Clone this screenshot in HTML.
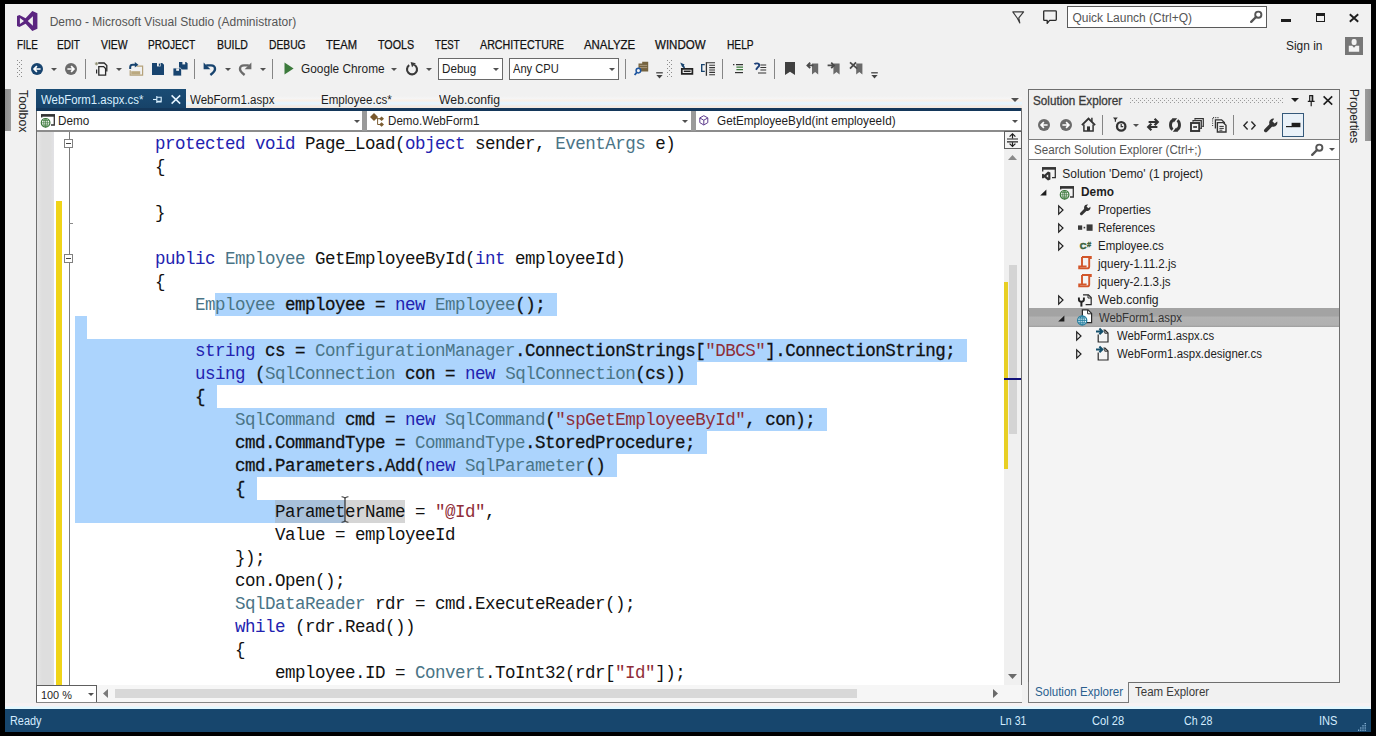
<!DOCTYPE html>
<html lang="en">
<head>
<meta charset="utf-8">
<title>Demo - Microsoft Visual Studio (Administrator)</title>
<style>
*{box-sizing:border-box;margin:0;padding:0}
html,body{width:1376px;height:736px;overflow:hidden;background:#000}
body{position:relative;font-family:"Liberation Sans",sans-serif;font-size:12px;color:#1e1e1e}
.abs,.t{position:absolute}
.t{white-space:nowrap;line-height:16px;height:16px;transform-origin:0 50%}
#win{position:absolute;left:5px;top:4px;width:1366px;height:728px;background:#f1f1f1;overflow:hidden}
/* everything inside #win is positioned in page coords via this wrapper */
#pg{position:absolute;left:-5px;top:-4px;width:1376px;height:736px}
.sep{position:absolute;width:1px;background:#858585}
.combo{position:absolute;background:#fff;border:1px solid #6a6a6a}
.code{position:absolute;left:75px;white-space:pre;font-family:"Liberation Mono","DejaVu Sans Mono",monospace;font-size:17.5px;letter-spacing:-0.5px;line-height:23px;height:23px;color:#111}
.selrow{-webkit-text-stroke:0.28px #111}.selrow span{-webkit-text-stroke:0}
.k{color:#2222b0}.y{color:#4a7486}.s{color:#8f2d38}
.ob{width:9px;height:9px;background:#fff;border:1px solid #808080}
.ob:after{content:"";position:absolute;left:1px;top:3px;width:5px;height:1px;background:#444}
.sel{position:absolute;background:#acd4fd;height:23px}
svg{position:absolute;overflow:visible}
.dd{position:absolute;width:0;height:0;border-left:3px solid transparent;border-right:3px solid transparent;border-top:3.5px solid #505050}
</style>
</head>
<body>
<div id="win"><div id="pg">

<!-- ===== title bar ===== -->
<div id="title">
<svg style="left:16.7px;top:10.9px" width="21" height="20" viewBox="0 0 21 20"><path d="M15.3 0 L20.4 2.2 V17.8 L15.3 20 L8.6 12.7 L2.4 16 L0 15 V5 L2.4 4 L8.6 7.3 Z M15.9 5.2 L10.8 10 L15.9 14.8 Z M2.9 6.9 V13.1 L7 10 Z" fill="#5b2580" fill-rule="evenodd"/></svg>
<!-- filter (funnel) -->
<svg style="left:1012px;top:10.5px" width="13" height="13" viewBox="0 0 13 13"><path d="M0.8 0.9 H11.6 L6.8 6.8 L7.8 12 L5.2 7 Z" fill="none" stroke="#3a3a3a" stroke-width="1.15" stroke-linejoin="round"/></svg>
<!-- feedback bubble -->
<svg style="left:1043px;top:10px" width="14" height="14" viewBox="0 0 14 14"><path d="M1.5 0.8 H12.5 Q13.3 0.8 13.3 1.6 V9.6 Q13.3 10.4 12.5 10.4 H6.6 L4.2 13.4 V10.4 H1.5 Q0.7 10.4 0.7 9.6 V1.6 Q0.7 0.8 1.5 0.8 Z" fill="none" stroke="#2a2a2a" stroke-width="1.3" stroke-linejoin="round"/></svg>
<!-- quick launch -->
<div class="abs" style="left:1067px;top:6px;width:200px;height:22px;background:#fff;border:1px solid #5a5a5a"></div>
<svg style="left:1250px;top:10px" width="13" height="13" viewBox="0 0 13 13"><circle cx="8.3" cy="4.7" r="3.1" fill="none" stroke="#555" stroke-width="1.9"/><path d="M6 7 L1.2 11.8" stroke="#555" stroke-width="2.4" stroke-linecap="round"/></svg>
<!-- window buttons -->
<div class="abs" style="left:1281px;top:19px;width:10px;height:3px;background:#1e1e1e"></div>
<div class="abs" style="left:1316px;top:13px;width:9px;height:9px;border:1px solid #1e1e1e;border-top-width:3px"></div>
<svg style="left:1349px;top:14px" width="10" height="8" viewBox="0 0 10 8"><path d="M0.8 0.2 L9.2 7.8 M9.2 0.2 L0.8 7.8" stroke="#1e1e1e" stroke-width="1.9"/></svg>
<!-- avatar -->
<div class="abs" style="left:1345px;top:37px;width:18px;height:18px;background:#777"></div>
<svg style="left:1345px;top:37px" width="18" height="18" viewBox="0 0 18 18"><rect x="6.6" y="2" width="5" height="6" rx="2" fill="#f4f4f4"/><path d="M3.8 14.8 V8.8 H7.2 L9 10.8 L10.8 8.8 H14.2 V14.8 Z" fill="#f4f4f4"/></svg>
<div class="t" style="left:49.7px;top:13.7px;color:#555;">Demo - Microsoft Visual Studio (Administrator)</div>
<div class="t" style="left:1072.4px;top:9.5px;color:#555;">Quick Launch (Ctrl+Q)</div>
<div class="t" style="left:1285.5px;top:38.2px;color:#1e1e1e;transform:scaleX(0.992);">Sign in</div>
</div>

<!-- ===== menu bar ===== -->
<div id="menubar">
<div class="t" style="left:16.6px;top:37.3px;color:#111;transform:scaleX(0.817);-webkit-text-stroke:0.25px #111;">FILE</div>
<div class="t" style="left:57.3px;top:37.3px;color:#111;transform:scaleX(0.837);-webkit-text-stroke:0.25px #111;">EDIT</div>
<div class="t" style="left:100.9px;top:37.3px;color:#111;transform:scaleX(0.867);-webkit-text-stroke:0.25px #111;">VIEW</div>
<div class="t" style="left:147.8px;top:37.3px;color:#111;transform:scaleX(0.844);-webkit-text-stroke:0.25px #111;">PROJECT</div>
<div class="t" style="left:216.5px;top:37.3px;color:#111;transform:scaleX(0.874);-webkit-text-stroke:0.25px #111;">BUILD</div>
<div class="t" style="left:268.5px;top:37.3px;color:#111;transform:scaleX(0.857);-webkit-text-stroke:0.25px #111;">DEBUG</div>
<div class="t" style="left:325.9px;top:37.3px;color:#111;transform:scaleX(0.933);-webkit-text-stroke:0.25px #111;">TEAM</div>
<div class="t" style="left:377.5px;top:37.3px;color:#111;transform:scaleX(0.895);-webkit-text-stroke:0.25px #111;">TOOLS</div>
<div class="t" style="left:434.9px;top:37.3px;color:#111;transform:scaleX(0.802);-webkit-text-stroke:0.25px #111;">TEST</div>
<div class="t" style="left:479.8px;top:37.3px;color:#111;transform:scaleX(0.892);-webkit-text-stroke:0.25px #111;">ARCHITECTURE</div>
<div class="t" style="left:583.8px;top:37.3px;color:#111;transform:scaleX(0.952);-webkit-text-stroke:0.25px #111;">ANALYZE</div>
<div class="t" style="left:655.3px;top:37.3px;color:#111;transform:scaleX(0.961);-webkit-text-stroke:0.25px #111;">WINDOW</div>
<div class="t" style="left:726.8px;top:37.3px;color:#111;transform:scaleX(0.848);-webkit-text-stroke:0.25px #111;">HELP</div>
</div>

<!-- ===== toolbar ===== -->
<div id="toolbar">
<!-- grip -->
<svg style="left:17px;top:60px" width="5" height="17" viewBox="0 0 5 17"><path d="M0.5 0 V17 M4.5 0 V17" stroke="#8c8c8c" stroke-width="1" stroke-dasharray="1 3"/><path d="M2.5 2 V17" stroke="#8c8c8c" stroke-width="1" stroke-dasharray="1 3"/></svg>
<!-- back -->
<svg style="left:31px;top:63px" width="12" height="12" viewBox="0 0 12 12"><circle cx="6" cy="6" r="6" fill="#18446f"/><path d="M9.6 6 H3.4 M5.9 3.2 L3.1 6 L5.9 8.8" fill="none" stroke="#fff" stroke-width="1.7"/></svg>
<div class="dd" style="left:51px;top:68px"></div>
<!-- forward -->
<svg style="left:65px;top:63px" width="12" height="12" viewBox="0 0 12 12"><circle cx="6" cy="6" r="6" fill="#6b6b6b"/><path d="M2.4 6 H8.6 M6.1 3.2 L8.9 6 L6.1 8.8" fill="none" stroke="#fff" stroke-width="1.7"/></svg>
<div class="sep" style="left:85px;top:59px;height:20px"></div>
<!-- new project -->
<svg style="left:95px;top:62px" width="14" height="14" viewBox="0 0 14 14"><path d="M3.2 1 H9.2 L11.8 3.6 V9.5" fill="none" stroke="#2a2a2a" stroke-width="1.3"/><path d="M3.8 4.6 H8.6 L10.6 6.6 V13.2 H3.8 Z" fill="#f7f7f7" stroke="#2a2a2a" stroke-width="1.3"/><path d="M1.6 7.5 V11.5" stroke="#2a2a2a" stroke-width="1.2"/><path d="M1.5 0 V3.4 M-0.2 1.7 H3.2 M0.3 0.5 L2.7 2.9 M2.7 0.5 L0.3 2.9" stroke="#8a8a6a" stroke-width="0.7"/></svg>
<div class="dd" style="left:116px;top:68px"></div>
<!-- open -->
<svg style="left:129px;top:62px" width="15" height="14" viewBox="0 0 15 14"><path d="M7.5 4.2 H13.6 V13.2 H1.2 V8.2" fill="none" stroke="#b5a27a" stroke-width="1.2"/><path d="M2.2 9.2 H11.2 V12.6 H2.2 Z" fill="#bba97f"/><path d="M1.2 7 V5.2 Q1.2 2.8 3.8 2.8 H7" fill="none" stroke="#18446f" stroke-width="2"/><path d="M5.8 0 L9.4 2.8 L5.8 5.6 Z" fill="#18446f"/></svg>
<!-- save -->
<svg style="left:152px;top:63px" width="12" height="12" viewBox="0 0 12 12"><path d="M0 0 H10.2 L12 1.8 V12 H0 Z" fill="#18446f"/><rect x="5" y="0" width="3.6" height="3.4" fill="#f0f0f0"/><rect x="6.8" y="0.6" width="1.2" height="2.2" fill="#18446f"/></svg>
<!-- save all -->
<svg style="left:173px;top:62px" width="15" height="14" viewBox="0 0 15 14"><path d="M6 0 H13.2 L14.6 1.4 V7.4 H6 Z" fill="#18446f"/><rect x="9.4" y="0" width="2.8" height="2.4" fill="#f0f0f0"/><path d="M0 6 H7.2 L8.6 7.4 V14 H0 Z" fill="#18446f" stroke="#efeff0" stroke-width="0.8"/><rect x="3.2" y="6.4" width="2.8" height="2.4" fill="#f0f0f0"/></svg>
<div class="sep" style="left:194px;top:59px;height:20px"></div>
<!-- undo -->
<svg style="left:203px;top:62px" width="14" height="14" viewBox="0 0 14 14"><path d="M3.2 3.4 H8 Q12 3.4 12 7 Q12 9.6 7.4 13" fill="none" stroke="#18446f" stroke-width="2.4"/><path d="M0.6 0.4 V7.2 H7.4 Z" fill="#18446f"/></svg>
<div class="dd" style="left:225px;top:68px"></div>
<!-- redo -->
<svg style="left:238px;top:62px" width="14" height="14" viewBox="0 0 14 14"><path d="M10.8 3.4 H6 Q2 3.4 2 7 Q2 9.6 6.6 13" fill="none" stroke="#6b6b6b" stroke-width="2.4"/><path d="M13.4 0.4 V7.2 H6.6 Z" fill="#6b6b6b"/></svg>
<div class="dd" style="left:260px;top:68px"></div>
<div class="sep" style="left:272px;top:59px;height:20px"></div>
<!-- start -->
<svg style="left:284px;top:62px" width="10" height="13" viewBox="0 0 10 13"><path d="M0.5 0.4 L9.6 6.5 L0.5 12.6 Z" fill="#3c7a3c"/></svg>
<div class="dd" style="left:391px;top:68px"></div>
<!-- refresh -->
<svg style="left:405px;top:62px" width="14" height="14" viewBox="0 0 14 14"><path d="M9.3 2.9 A5 5 0 1 1 4.2 3.2" fill="none" stroke="#3a3a3a" stroke-width="2.1"/><path d="M5.6 0 L10.8 1.2 L7 5.2 Z" fill="#3a3a3a"/></svg>
<div class="dd" style="left:426px;top:68px"></div>
<!-- combos -->
<div class="combo" style="left:438px;top:58px;width:65px;height:22px"></div>
<div class="dd" style="left:493px;top:68px"></div>
<div class="combo" style="left:509px;top:58px;width:110px;height:22px"></div>
<div class="dd" style="left:609px;top:68px"></div>
<div class="sep" style="left:625px;top:59px;height:20px"></div>
<!-- find in files -->
<svg style="left:634px;top:61px" width="15" height="15" viewBox="0 0 15 15"><path d="M4.5 2.4 H8.2 V0.8 H14.2 V10.5 H4.5 Z" fill="#75633f"/><path d="M5.6 4.4 H13.2 M5.6 6.6 H13.2" stroke="#a8977a" stroke-width="1"/><circle cx="4.4" cy="9.6" r="2.3" fill="#f2f2f2" stroke="#1e56a0" stroke-width="1.5"/><path d="M2.8 11.4 L0.6 14" stroke="#1e56a0" stroke-width="1.8"/></svg>
<svg style="left:656px;top:71.6px" width="7" height="7" viewBox="0 0 7 7"><path d="M0.2 0.8 H6.8" stroke="#444" stroke-width="1.3"/><path d="M0.4 3 H6.6 L3.5 6.6 Z" fill="#444"/></svg>
<svg style="left:667px;top:60px" width="5" height="17" viewBox="0 0 5 17"><path d="M0.5 0 V17 M4.5 0 V17" stroke="#8c8c8c" stroke-width="1" stroke-dasharray="1 3"/><path d="M2.5 2 V17" stroke="#8c8c8c" stroke-width="1" stroke-dasharray="1 3"/></svg>
<!-- navigate icon -->
<svg style="left:680px;top:62px" width="14" height="13" viewBox="0 0 14 13"><path d="M1.8 6.8 H12.4 V11.8 H1.8 Z" fill="none" stroke="#222" stroke-width="1.7"/><path d="M3.8 9.3 H10.6" stroke="#222" stroke-width="1.5"/><path d="M0.2 0.6 L4.6 2.4 L2.2 5.2 Z" fill="#18446f"/><path d="M2.6 3 L4.4 6" stroke="#18446f" stroke-width="1.6"/></svg>
<!-- call hierarchy -->
<svg style="left:701px;top:62px" width="15" height="14" viewBox="0 0 15 14"><path d="M3.8 2.6 H0.7 V9.4 H3.8" fill="none" stroke="#18446f" stroke-width="1.4"/><path d="M5.4 0.2 V13.8" stroke="#333" stroke-width="1.3"/><path d="M5.4 0.8 H14 M8.2 3.2 H14 M8.2 5.6 H14 M8.2 8 H14 M8.2 10.4 H14 M8.2 12.8 H14" stroke="#333" stroke-width="1.1"/></svg>
<div class="sep" style="left:722px;top:59px;height:20px"></div>
<!-- comment -->
<svg style="left:732px;top:63px" width="12" height="11" viewBox="0 0 12 11"><path d="M1 1.6 H2.4 M4 1.6 H11" stroke="#333" stroke-width="1.2"/><path d="M4.4 4.1 H11 M4.4 6.6 H11" stroke="#3c7a3c" stroke-width="1.2"/><path d="M3 9.6 H11" stroke="#333" stroke-width="1.2"/></svg>
<!-- uncomment -->
<svg style="left:754px;top:62px" width="14" height="13" viewBox="0 0 14 13"><path d="M6.4 3 H12.2 M6.4 5.5 H12.2 M6.4 8 H12.2 M4 11 H12.2" stroke="#333" stroke-width="1.2"/><path d="M0.4 2.2 Q1.2 1.4 3 1.4 Q5.2 1.4 5.2 3.2 Q5.2 4.6 3.6 5.4 L2 7.8" fill="none" stroke="#1c3f78" stroke-width="1.9"/></svg>
<div class="sep" style="left:774px;top:59px;height:20px"></div>
<!-- bookmark -->
<svg style="left:785px;top:62px" width="10" height="13" viewBox="0 0 10 13"><path d="M0 0 H10 V13 L5 9.8 L0 13 Z" fill="#404040"/></svg>
<!-- prev bookmark -->
<svg style="left:806px;top:62px" width="13" height="13" viewBox="0 0 13 13"><path d="M6 1.4 H12.2 V12.6 L9.1 10 L6 12.6 Z" fill="#6a6a6a"/><path d="M7.4 3.4 H1.6 M4.2 0.6 L1.4 3.4 L4.2 6.2" fill="none" stroke="#4a4a4a" stroke-width="1.8"/></svg>
<!-- next bookmark -->
<svg style="left:827px;top:62px" width="13" height="13" viewBox="0 0 13 13"><path d="M6.4 1.4 H12.6 V12.6 L9.5 10 L6.4 12.6 Z" fill="#6a6a6a"/><path d="M0.6 3.4 H7 M4.2 0.6 L7 3.4 L4.2 6.2" fill="none" stroke="#4a4a4a" stroke-width="1.8"/></svg>
<!-- clear bookmarks -->
<svg style="left:849px;top:62px" width="14" height="13" viewBox="0 0 14 13"><path d="M7.2 1.4 H13.4 V12.6 L10.3 10 L7.2 12.6 Z" fill="#6a6a6a"/><path d="M1 0.4 L8.2 6.6 M7 0.4 L1 6.6" stroke="#4a4a4a" stroke-width="1.8"/></svg>
<svg style="left:871px;top:71.6px" width="7" height="7" viewBox="0 0 7 7"><path d="M0.2 0.8 H6.8" stroke="#444" stroke-width="1.3"/><path d="M0.4 3 H6.6 L3.5 6.6 Z" fill="#444"/></svg>
<div class="t" style="left:301.2px;top:60.7px;color:#1e1e1e;transform:scaleX(0.987);">Google Chrome</div>
<div class="t" style="left:442.4px;top:60.7px;color:#1e1e1e;transform:scaleX(0.970);">Debug</div>
<div class="t" style="left:513.2px;top:60.7px;color:#1e1e1e;transform:scaleX(0.928);">Any CPU</div>
</div>

<!-- ===== left toolbox tab ===== -->
<div id="toolbox">
<div class="abs" style="left:5px;top:89px;width:5.5px;height:42px;background:linear-gradient(90deg,#8e8e8e,#9c9c9c)"></div>
<div class="t" style="left:30.7px;top:89.6px;transform-origin:0 0;transform:rotate(90deg);font-size:12.3px;color:#222">Toolbox</div>
<!-- right side: properties -->
<div class="abs" style="left:1365px;top:89px;width:6px;height:52px;background:linear-gradient(90deg,#9c9c9c,#8e8e8e)"></div>
<div class="t" style="left:1362.4px;top:88.8px;transform-origin:0 0;transform:rotate(90deg);font-size:12px;color:#222;letter-spacing:-0.05px">Properties</div>
</div>

<!-- ===== document tabs ===== -->
<div id="tabs">
<div class="abs" style="left:186px;top:96px;width:836px;height:12px;background:linear-gradient(#f1f1f1 0,#f5f5f5 20%,#f8efe6 40%,#e6f5fe 56%,#e8f4fb 68%,#f3eae2 85%,#f3eae2 100%)"></div>
<div class="abs" style="left:36px;top:89px;width:150px;height:20px;background:linear-gradient(#1a4c75,#174268)"></div>
<!-- pin -->
<svg style="left:153px;top:95px" width="10" height="9" viewBox="0 0 10 9"><path d="M0 4.5 H3.6" stroke="#d8f0ff" stroke-width="1.1"/><path d="M3.8 1 V8 M3.8 2.2 H8.2 V6.2 H3.8 M3.8 7 H8.6" fill="none" stroke="#d8f0ff" stroke-width="1.1"/></svg>
<!-- close -->
<svg style="left:171px;top:95px" width="10" height="9" viewBox="0 0 10 9"><path d="M0.6 0.4 L9.2 8.6 M9.2 0.4 L0.6 8.6" stroke="#e4f4ff" stroke-width="1.5"/></svg>
<!-- overflow arrow -->
<div class="dd" style="left:1011px;top:98px;border-left-width:4px;border-right-width:4px;border-top-width:4px"></div>
<div class="t" style="left:40.6px;top:91.7px;color:#d8f0ff;transform:scaleX(0.950);">WebForm1.aspx.cs*</div>
<div class="t" style="left:189.9px;top:91.7px;color:#1e1e1e;transform:scaleX(0.962);">WebForm1.aspx</div>
<div class="t" style="left:321.3px;top:91.7px;color:#1e1e1e;transform:scaleX(0.964);">Employee.cs*</div>
<div class="t" style="left:439.0px;top:91.7px;color:#1e1e1e;transform:scaleX(1.020);">Web.config</div>
</div>

<!-- ===== editor ===== -->
<div id="editor">
<!-- blue underline below tabs -->
<div class="abs" style="left:36px;top:108px;width:986px;height:2.7px;background:#14375a"></div>
<!-- nav bar -->
<div class="abs" style="left:36px;top:110.5px;width:986px;height:20px;background:#fff"></div>
<div class="abs" style="left:36px;top:130px;width:986px;height:2px;background:#8c8c8c"></div>
<div class="abs" style="left:362px;top:110.5px;width:4.5px;height:20px;background:#9a9a9a"></div>
<div class="abs" style="left:691px;top:110.5px;width:4.5px;height:20px;background:#9a9a9a"></div>



<!-- nav icons -->
<svg style="left:41px;top:114px" width="14" height="14" viewBox="0 0 14 14"><path d="M0.7 3.4 V1 H13.3 V11 H10" fill="none" stroke="#333" stroke-width="1.3"/><rect x="0" y="0.2" width="14" height="2.5" fill="#333"/><circle cx="4.6" cy="8.8" r="4.3" fill="#fff" stroke="#3c7a3c" stroke-width="1.2"/><path d="M0.4 8.8 H8.8 M4.6 4.6 V13 M1.4 6.6 H7.8 M1.4 11 H7.8" stroke="#3c7a3c" stroke-width="0.75"/><ellipse cx="4.6" cy="8.8" rx="1.9" ry="4.2" fill="none" stroke="#3c7a3c" stroke-width="0.75"/></svg>
<svg style="left:370px;top:113px" width="15" height="15" viewBox="0 0 15 15"><path d="M4 0.1 L8 4 L4 7.9 L0 4 Z" fill="#7a5a2e"/><path d="M11.6 3.4 L14 5.7 L11.6 8 L9.2 5.7 Z M11.6 9.2 L14 11.5 L11.6 13.8 L9.2 11.5 Z" fill="#7c5e33"/><path d="M5.6 5 H7.6 V11.5 H10 M7.6 5.7 H10" fill="none" stroke="#7c5e33" stroke-width="1"/></svg>
<svg style="left:699px;top:115px" width="10" height="11" viewBox="0 0 10 11"><path d="M4.8 0.7 L8.8 2.9 V7.6 L4.8 10 L0.8 7.6 V2.9 Z M0.9 3 L4.8 5.2 L8.7 3 M4.8 5.2 V9.8" fill="none" stroke="#5c3a8c" stroke-width="1"/></svg>
<div class="dd" style="left:354px;top:120px"></div>
<div class="dd" style="left:682px;top:120px"></div>
<div class="dd" style="left:1012px;top:120px"></div>
<!-- editor surface -->
<div class="abs" style="left:37px;top:132px;width:967px;height:553px;background:#fff;overflow:hidden">
<div class="abs" style="left:-37px;top:-132px;width:1376px;height:736px">
<div class="abs" style="left:37px;top:132px;width:17px;height:553px;background:linear-gradient(90deg,#e6e6e6,#dedede 30%,#dedede 80%,#e2e2e6)"></div>
<div class="abs" style="left:56px;top:200.6px;width:6px;height:485px;background:#f0d418"></div>
<div class="abs" style="left:69px;top:132px;width:1px;height:553px;background:#7c7c7c"></div>
<div class="abs" style="left:69px;top:223px;width:4px;height:1px;background:#8a8a8a"></div>
<div class="abs ob" style="left:64px;top:139px"></div>
<div class="abs ob" style="left:64px;top:254px"></div>
<div class="sel" style="left:215px;top:293px;width:342px"></div>
<div class="sel" style="left:75px;top:316px;width:12px"></div>
<div class="sel" style="left:75px;top:339px;width:892px"></div>
<div class="sel" style="left:75px;top:362px;width:622px"></div>
<div class="sel" style="left:75px;top:385px;width:142px"></div>
<div class="sel" style="left:75px;top:408px;width:752px"></div>
<div class="sel" style="left:75px;top:431px;width:632px"></div>
<div class="sel" style="left:75px;top:454px;width:542px"></div>
<div class="sel" style="left:75px;top:477px;width:182px"></div>
<div class="sel" style="left:75px;top:500px;width:270px"></div>
<div class="abs" style="left:275px;top:500px;width:70px;height:23px;background:#a9c1da"></div>
<div class="abs" style="left:345px;top:500px;width:60px;height:23px;background:#d5d5d5"></div>
<div class="code" style="top:132.8px">        <span class="k">protected</span> <span class="k">void</span> Page_Load(<span class="k">object</span> sender, <span class="y">EventArgs</span> e)</div>
<div class="code" style="top:155.8px">        {</div>
<div class="code" style="top:201.8px">        }</div>
<div class="code" style="top:247.8px">        <span class="k">public</span> <span class="y">Employee</span> GetEmployeeById(<span class="k">int</span> employeeId)</div>
<div class="code" style="top:270.8px">        {</div>
<div class="code selrow" style="top:293.8px">            <span class="y">Employee</span> employee = <span class="k">new</span> <span class="y">Employee</span>();</div>
<div class="code selrow" style="top:339.8px">            <span class="k">string</span> cs = <span class="y">ConfigurationManager</span>.ConnectionStrings[<span class="s">"DBCS"</span>].ConnectionString;</div>
<div class="code selrow" style="top:362.8px">            <span class="k">using</span> (<span class="y">SqlConnection</span> con = <span class="k">new</span> <span class="y">SqlConnection</span>(cs))</div>
<div class="code selrow" style="top:385.8px">            {</div>
<div class="code selrow" style="top:408.8px">                <span class="y">SqlCommand</span> cmd = <span class="k">new</span> <span class="y">SqlCommand</span>(<span class="s">"spGetEmployeeById"</span>, con);</div>
<div class="code selrow" style="top:431.8px">                cmd.CommandType = <span class="y">CommandType</span>.StoredProcedure;</div>
<div class="code selrow" style="top:454.8px">                cmd.Parameters.Add(<span class="k">new</span> <span class="y">SqlParameter</span>()</div>
<div class="code selrow" style="top:477.8px">                {</div>
<div class="code" style="top:500.8px">                    ParameterName = <span class="s">"@Id"</span>,</div>
<div class="code" style="top:523.8px">                    Value = employeeId</div>
<div class="code" style="top:546.8px">                });</div>
<div class="code" style="top:569.8px">                con.Open();</div>
<div class="code" style="top:592.8px">                <span class="y">SqlDataReader</span> rdr = cmd.ExecuteReader();</div>
<div class="code" style="top:615.8px">                <span class="k">while</span> (rdr.Read())</div>
<div class="code" style="top:638.8px">                {</div>
<div class="code" style="top:661.8px">                    employee.ID = <span class="y">Convert</span>.ToInt32(rdr[<span class="s">"Id"</span>]);</div>
<svg style="left:341px;top:496px" width="8" height="27" viewBox="0 0 8 27"><path d="M0.6 0.8 Q3 0.8 4 2.2 Q5 0.8 7.4 0.8 M4 2 V25 M0.6 26.2 Q3 26.2 4 24.8 Q5 26.2 7.4 26.2" fill="none" stroke="#222" stroke-width="1.1"/></svg>
</div></div>
<!-- editor frame -->
<div class="abs" style="left:36px;top:111px;width:1px;height:591px;background:#6e6e6e"></div>
<div class="abs" style="left:1021px;top:108px;width:1px;height:594px;background:#6e6e6e"></div>
<!-- vertical scrollbar -->
<div class="abs" style="left:1004px;top:132px;width:17px;height:553px;background:#f0f0f0"></div>
<div class="abs" style="left:1004px;top:130.5px;width:18px;height:18.5px;background:#f4f4f4;border:1px solid #5e5e5e"></div>
<svg style="left:1007px;top:133px" width="11" height="14" viewBox="0 0 11 14"><path d="M0 6 H11 M0 8.8 H11" stroke="#1e1e1e" stroke-width="1.2"/><path d="M5.5 1 V5.6 M5.5 9.2 V13" stroke="#1e1e1e" stroke-width="1.2"/><path d="M2.6 3.6 L5.5 0.8 L8.4 3.6 M2.6 10.6 L5.5 13.4 L8.4 10.6" fill="none" stroke="#1e1e1e" stroke-width="1.2"/></svg>
<svg style="left:1008px;top:155px" width="9" height="5" viewBox="0 0 9 5"><path d="M0 5 L4.5 0 L9 5 Z" fill="#8a8a8a"/></svg>
<svg style="left:1008px;top:674px" width="9" height="5" viewBox="0 0 9 5"><path d="M0 0 L4.5 5 L9 0 Z" fill="#6a6a6a"/></svg>
<div class="abs" style="left:1008.5px;top:265px;width:8px;height:169px;background:#d4d4d4"></div>
<div class="abs" style="left:1004px;top:282px;width:3.7px;height:187px;background:#e8cf24"></div>
<div class="abs" style="left:1004px;top:378px;width:17px;height:2px;background:#10107a"></div>
<!-- bottom bar -->
<div class="abs" style="left:36px;top:685px;width:986px;height:17px;background:#f6f6f6"></div>
<div class="abs" style="left:36px;top:685px;width:61px;height:17.5px;background:#fff;border:1px solid #5e5e5e"></div>
<div class="dd" style="left:88px;top:693px"></div>
<svg style="left:103px;top:689px" width="5" height="9" viewBox="0 0 5 9"><path d="M5 0 L0 4.5 L5 9 Z" fill="#7a7a7a"/></svg>
<svg style="left:993px;top:689px" width="5" height="9" viewBox="0 0 5 9"><path d="M0 0 L5 4.5 L0 9 Z" fill="#6a6a6a"/></svg>
<div class="abs" style="left:114.5px;top:689px;width:742px;height:9px;background:#d8d8d8"></div>
<div class="abs" style="left:36px;top:702px;width:986px;height:1px;background:#858585"></div>
<div class="t" style="left:58.3px;top:112.9px;color:#1e1e1e;transform:scaleX(0.975);">Demo</div>
<div class="t" style="left:387.6px;top:112.9px;color:#1e1e1e;transform:scaleX(0.967);">Demo.WebForm1</div>
<div class="t" style="left:716.9px;top:112.9px;color:#1e1e1e;transform:scaleX(0.978);">GetEmployeeById(int employeeId)</div>
<div class="t" style="left:40.9px;top:686.7px;color:#1e1e1e;font-size:11px;transform:scaleX(0.990);">100 %</div>
</div>

<!-- ===== solution explorer ===== -->
<div id="solexp">
<!-- panel frame -->
<div class="abs" style="left:1028px;top:89px;width:312px;height:594px;background:#f4f4f4;border:1px solid #6e6e6e"></div>
<div class="abs" style="left:1029px;top:90px;width:310px;height:49px;background:#f0f0f0"></div>
<!-- title grip dots -->
<svg style="left:1130px;top:98px" width="154" height="5" viewBox="0 0 154 5"><path d="M0 0.5 H154 M0 4.5 H154" stroke="#9a9a9a" stroke-width="1" stroke-dasharray="1 3"/><path d="M2 2.5 H154" stroke="#9a9a9a" stroke-width="1" stroke-dasharray="1 3"/></svg>
<div class="dd" style="left:1291px;top:98px;border-left-width:4px;border-right-width:4px;border-top-width:4px;border-top-color:#1e1e1e"></div>
<!-- pin -->
<svg style="left:1306.4px;top:94.8px" width="10" height="12" viewBox="0 0 10 12"><path d="M3.2 0.6 H7.2 M3.7 0.6 V6.2 M6.7 0.6 V6.2 M1.8 6.4 H8.6 M5.2 6.4 V11.2" fill="none" stroke="#1e1e1e" stroke-width="1.2"/><path d="M5.6 0.6 H6.9 V6.2 H5.6 Z" fill="#1e1e1e"/></svg>
<svg style="left:1323px;top:96px" width="10" height="9" viewBox="0 0 10 9"><path d="M0.6 0.4 L9.2 8.6 M9.2 0.4 L0.6 8.6" stroke="#1e1e1e" stroke-width="1.6"/></svg>
<!-- toolbar -->
<svg style="left:1038px;top:119px" width="12" height="12" viewBox="0 0 12 12"><circle cx="6" cy="6" r="6" fill="#6b6b6b"/><path d="M9.6 6 H3.4 M5.9 3.2 L3.1 6 L5.9 8.8" fill="none" stroke="#fff" stroke-width="1.7"/></svg>
<svg style="left:1060px;top:119px" width="12" height="12" viewBox="0 0 12 12"><circle cx="6" cy="6" r="6" fill="#6b6b6b"/><path d="M2.4 6 H8.6 M6.1 3.2 L8.9 6 L6.1 8.8" fill="none" stroke="#fff" stroke-width="1.7"/></svg>
<!-- home -->
<svg style="left:1081px;top:117px" width="15" height="15" viewBox="0 0 15 15"><path d="M0.9 8.2 L7.5 1.6 L14.1 8.2" fill="none" stroke="#333" stroke-width="1.9"/><path d="M2.9 7.6 V14 H12.1 V7.6" fill="none" stroke="#333" stroke-width="1.5"/><rect x="6" y="9.4" width="3" height="4.6" fill="#333"/><path d="M10.9 0.8 V4.6" stroke="#333" stroke-width="1.5"/></svg>
<div class="sep" style="left:1102px;top:115px;height:20px"></div>
<!-- pending changes filter -->
<svg style="left:1113px;top:117px" width="14" height="15" viewBox="0 0 14 15"><circle cx="8.2" cy="9.4" r="4.2" fill="none" stroke="#333" stroke-width="2.3"/><path d="M8.2 7 V9.6 H10.2" fill="none" stroke="#333" stroke-width="1.2"/><path d="M0 0.6 H4.8 L3 2.8 V4.8 H1.8 V2.8 Z" fill="#333"/></svg>
<div class="dd" style="left:1133px;top:124px"></div>
<!-- sync -->
<svg style="left:1147px;top:118px" width="12" height="13" viewBox="0 0 12 13"><path d="M1.6 4 H10.6 M7.6 0.8 L10.8 4 L7.6 7.2" fill="none" stroke="#333" stroke-width="2.2"/><path d="M10.4 9 H1.4 M4.4 5.8 L1.2 9 L4.4 12.2" fill="none" stroke="#333" stroke-width="2.2"/></svg>
<!-- refresh -->
<svg style="left:1169px;top:118px" width="12" height="14" viewBox="0 0 12 14"><path d="M4.2 2.2 Q1.5 3.4 1.5 7 Q1.5 10.2 3.6 11.6" fill="none" stroke="#333" stroke-width="2.9"/><path d="M7.8 11.8 Q10.5 10.6 10.5 7 Q10.5 3.8 8.4 2.4" fill="none" stroke="#333" stroke-width="2.9"/><path d="M3 0.2 H8.2 L4.8 4.6 Z M9 13.8 H3.8 L7.2 9.4 Z" fill="#333"/></svg>
<!-- collapse all -->
<svg style="left:1190px;top:118px" width="14" height="14" viewBox="0 0 14 14"><path d="M5 1.8 V0.7 H13.3 V8.4 H12.2" fill="none" stroke="#333" stroke-width="1.2"/><path d="M3 3.8 V2.7 H11.3 V10.4 H10.2" fill="none" stroke="#333" stroke-width="1.2"/><rect x="1" y="5" width="8.2" height="8" fill="none" stroke="#333" stroke-width="1.9"/><path d="M3.2 9 H7" stroke="#333" stroke-width="1.7"/></svg>
<!-- show all files -->
<svg style="left:1212px;top:117px" width="15" height="16" viewBox="0 0 15 16"><path d="M0.6 9 V0.6 H7.6" fill="none" stroke="#444" stroke-width="1.1" stroke-dasharray="1.1 1.1"/><path d="M3.4 11.4 V2.9 H9.6 L12.4 5.6 V7" fill="none" stroke="#333" stroke-width="1.3"/><path d="M5.4 5.6 H11.2 L14 8.2 V15 H5.4 Z" fill="#f4f4f4" stroke="#333" stroke-width="1.4"/><path d="M7.4 9.4 H11.8 M7.4 11.4 H11.8 M7.4 13.2 H10.4" stroke="#333" stroke-width="1"/></svg>
<div class="sep" style="left:1233px;top:115px;height:20px"></div>
<!-- view code -->
<svg style="left:1243px;top:121px" width="13" height="9" viewBox="0 0 13 9"><path d="M4.6 0.6 L0.9 4.5 L4.6 8.4 M8.4 0.6 L12.1 4.5 L8.4 8.4" fill="none" stroke="#2a2a2a" stroke-width="1.4"/></svg>
<!-- wrench -->
<svg style="left:1264px;top:118px" width="14" height="14" viewBox="0 0 14 14"><path d="M1.8 12.4 L7.4 6.8" stroke="#333" stroke-width="3.6" stroke-linecap="round"/><path d="M13.2 3.6 A4.1 4.1 0 1 1 10.2 0.7 L8.4 3.2 L10.6 5.4 Z" fill="#333"/></svg>
<!-- preview selected (active) -->
<div class="abs" style="left:1282px;top:113px;width:22px;height:24px;background:#e9f1f8;border:1px solid #35597a"></div>
<svg style="left:1286px;top:122px" width="15" height="6" viewBox="0 0 15 6"><path d="M0 4.6 H6" stroke="#1e1e1e" stroke-width="1.2"/><rect x="5.6" y="0.8" width="8.8" height="4.4" fill="#1e1e1e"/></svg>
<!-- search box -->
<div class="abs" style="left:1028px;top:139px;width:312px;height:21px;background:#fff;border:1px solid #7c7c7c"></div>
<svg style="left:1311px;top:143px" width="13" height="13" viewBox="0 0 13 13"><circle cx="8.3" cy="4.7" r="3.1" fill="none" stroke="#555" stroke-width="1.9"/><path d="M6 7 L1.2 11.8" stroke="#555" stroke-width="2.4" stroke-linecap="round"/></svg>
<div class="dd" style="left:1329px;top:148px"></div>
<!-- selected row -->
<div class="abs" style="left:1029px;top:308px;width:310px;height:18.5px;background:linear-gradient(#a3a3a3 0,#a3a3a3 42%,#b3b3b3 48%,#b0b0b0 90%,#9c9c9c 100%)"></div>
<!-- tree expanders -->
<svg style="left:1040px;top:189px" width="7" height="7" viewBox="0 0 7 7"><path d="M6.4 0.4 V6.6 H0.2 Z" fill="#1e1e1e"/></svg>
<svg class="ex" style="left:1058px;top:205px" width="6" height="10" viewBox="0 0 6 10"><path d="M0.7 0.9 L5 5 L0.7 9.1 Z" fill="none" stroke="#1e1e1e" stroke-width="1.2"/></svg>
<svg class="ex" style="left:1058px;top:223px" width="6" height="10" viewBox="0 0 6 10"><path d="M0.7 0.9 L5 5 L0.7 9.1 Z" fill="none" stroke="#1e1e1e" stroke-width="1.2"/></svg>
<svg class="ex" style="left:1058px;top:241px" width="6" height="10" viewBox="0 0 6 10"><path d="M0.7 0.9 L5 5 L0.7 9.1 Z" fill="none" stroke="#1e1e1e" stroke-width="1.2"/></svg>
<svg class="ex" style="left:1058px;top:295px" width="6" height="10" viewBox="0 0 6 10"><path d="M0.7 0.9 L5 5 L0.7 9.1 Z" fill="none" stroke="#1e1e1e" stroke-width="1.2"/></svg>
<svg style="left:1058px;top:315px" width="7" height="7" viewBox="0 0 7 7"><path d="M6.4 0.4 V6.6 H0.2 Z" fill="#1e1e1e"/></svg>
<svg class="ex" style="left:1076px;top:331px" width="6" height="10" viewBox="0 0 6 10"><path d="M0.7 0.9 L5 5 L0.7 9.1 Z" fill="none" stroke="#1e1e1e" stroke-width="1.2"/></svg>
<svg class="ex" style="left:1076px;top:349px" width="6" height="10" viewBox="0 0 6 10"><path d="M0.7 0.9 L5 5 L0.7 9.1 Z" fill="none" stroke="#1e1e1e" stroke-width="1.2"/></svg>
<!-- tree icons -->
<!-- solution -->
<svg style="left:1042px;top:167px" width="14" height="14" viewBox="0 0 14 14"><path d="M0.7 4.4 V1 H13.3 V10.6 H10" fill="none" stroke="#333" stroke-width="1.3"/><rect x="0" y="0.2" width="14" height="2.5" fill="#333"/><path d="M6 4.6 L8.4 5.6 V12.6 L6 13.6 L2.4 10.4 L1 11.4 L0 11 V7.2 L1 6.8 L2.4 7.8 Z M6.2 7.4 L4.2 9.1 L6.2 10.8 Z" fill="#333" fill-rule="evenodd"/></svg>
<!-- web project -->
<svg style="left:1060px;top:186px" width="14" height="14" viewBox="0 0 14 14"><path d="M0.7 3.4 V1 H13.3 V11 H10" fill="none" stroke="#333" stroke-width="1.3"/><rect x="0" y="0.2" width="14" height="2.5" fill="#333"/><circle cx="4.6" cy="8.8" r="4.3" fill="#f4f4f4" stroke="#3c7a3c" stroke-width="1.2"/><path d="M0.4 8.8 H8.8 M4.6 4.6 V13 M1.4 6.6 H7.8 M1.4 11 H7.8" stroke="#3c7a3c" stroke-width="0.75"/><ellipse cx="4.6" cy="8.8" rx="1.9" ry="4.2" fill="none" stroke="#3c7a3c" stroke-width="0.75"/></svg>
<!-- properties wrench -->
<svg style="left:1080px;top:204px" width="11" height="11" viewBox="0 0 14 14"><path d="M1.8 12.4 L7.4 6.8" stroke="#333" stroke-width="3.8" stroke-linecap="round"/><path d="M13.2 3.6 A4.1 4.1 0 1 1 10.2 0.7 L8.4 3.2 L10.6 5.4 Z" fill="#333"/></svg>
<!-- references -->
<svg style="left:1078px;top:224px" width="15" height="8" viewBox="0 0 15 8"><rect x="0" y="1.4" width="4.2" height="4.4" fill="#3a3a3a"/><rect x="5.6" y="2.8" width="1.6" height="1.6" fill="#3a3a3a"/><rect x="8.6" y="0.4" width="6" height="6.4" fill="#3a3a3a"/></svg>
<!-- C# -->
<div class="t" style="left:1079.8px;top:238px;font-size:9.4px;font-weight:700;color:#3a623a;line-height:14px;height:14px;-webkit-text-stroke:0.5px #3a623a">C<span style="font-size:7.4px;vertical-align:2.4px;margin-left:0.3px;-webkit-text-stroke:0.35px #3a623a">#</span></div>
<!-- js files -->
<svg style="left:1078px;top:255px" width="14" height="15" viewBox="0 0 14 15"><path d="M4 2 H12.8 V4 M11.2 2.4 V11.4 Q11.2 13.4 9 13.4 H1.2 V11.4 H8.6" fill="none" stroke="#d2562a" stroke-width="1.9"/><path d="M4 2 V11" stroke="#d2562a" stroke-width="1.9"/></svg>
<svg style="left:1078px;top:273px" width="14" height="15" viewBox="0 0 14 15"><path d="M4 2 H12.8 V4 M11.2 2.4 V11.4 Q11.2 13.4 9 13.4 H1.2 V11.4 H8.6" fill="none" stroke="#d2562a" stroke-width="1.9"/><path d="M4 2 V11" stroke="#d2562a" stroke-width="1.9"/></svg>
<!-- web.config -->
<svg style="left:1078px;top:293.6px" width="14" height="13" viewBox="0 0 14 13"><path d="M5 0.8 H10.4 L13.2 3.6 V10.6 H7.6" fill="none" stroke="#2a2a2a" stroke-width="1.2"/><path d="M10 0.8 V4 H13" fill="none" stroke="#2a2a2a" stroke-width="1"/><path d="M3.4 7.4 V12.6" stroke="#222" stroke-width="2"/><path d="M0.9 3.4 V5.4 Q0.9 7.6 3.4 7.6 Q5.9 7.6 5.9 5.4 V3.4" fill="none" stroke="#222" stroke-width="1.9"/></svg>
<!-- webform -->
<svg style="left:1077px;top:309px" width="16" height="17" viewBox="0 0 16 17"><path d="M5.4 0.8 H11 L14.6 4.4 V13.6 H5.4 Z" fill="#fff" stroke="#2a2a2a" stroke-width="1.2"/><path d="M10.6 1 V4.8 H14.4" fill="none" stroke="#2a2a2a" stroke-width="1"/><circle cx="5.2" cy="11.4" r="4.6" fill="#e8f4fa" stroke="#1f7a9c" stroke-width="1.2"/><path d="M0.6 11.4 H9.8 M5.2 6.8 V16 M1.8 9 H8.6 M1.8 13.8 H8.6" stroke="#1f7a9c" stroke-width="0.9"/><ellipse cx="5.2" cy="11.4" rx="2.1" ry="4.6" fill="none" stroke="#1f7a9c" stroke-width="0.9"/></svg>
<!-- code-behind files -->
<svg style="left:1096px;top:328px" width="13" height="15" viewBox="0 0 13 15"><path d="M2.2 6.4 V14 H12 V5 L9 2 H7.4" fill="none" stroke="#2a2a2a" stroke-width="1.2"/><path d="M8.8 2.2 V5.2 H11.8" fill="none" stroke="#2a2a2a" stroke-width="1"/><path d="M0 3.4 H5.8 M3.4 0.6 L6.4 3.4 L3.4 6.2" fill="none" stroke="#15506c" stroke-width="2"/></svg>
<svg style="left:1096px;top:346px" width="13" height="15" viewBox="0 0 13 15"><path d="M2.2 6.4 V14 H12 V5 L9 2 H7.4" fill="none" stroke="#2a2a2a" stroke-width="1.2"/><path d="M8.8 2.2 V5.2 H11.8" fill="none" stroke="#2a2a2a" stroke-width="1"/><path d="M0 3.4 H5.8 M3.4 0.6 L6.4 3.4 L3.4 6.2" fill="none" stroke="#15506c" stroke-width="2"/></svg>
<!-- bottom tabs -->
<div class="abs" style="left:1028px;top:682px;width:101px;height:21px;background:#f4f4f5;border:1px solid #7a7a7a;border-top:none"></div>
<div class="t" style="left:1032.9px;top:93.1px;color:#3a3a3a;transform:scaleX(0.975);-webkit-text-stroke:0.3px #3a3a3a;">Solution Explorer</div>
<div class="t" style="left:1034.2px;top:141.5px;color:#555;transform:scaleX(0.967);">Search Solution Explorer (Ctrl+;)</div>
<div class="t" style="left:1062.3px;top:165.6px;color:#1e1e1e;">Solution 'Demo' (1 project)</div>
<div class="t" style="left:1080.6px;top:183.6px;color:#1e1e1e;font-weight:700;transform:scaleX(0.987);">Demo</div>
<div class="t" style="left:1098.3px;top:201.6px;color:#1e1e1e;transform:scaleX(0.967);">Properties</div>
<div class="t" style="left:1098.3px;top:219.6px;color:#1e1e1e;transform:scaleX(0.929);">References</div>
<div class="t" style="left:1098.3px;top:237.6px;color:#1e1e1e;transform:scaleX(0.956);">Employee.cs</div>
<div class="t" style="left:1098.3px;top:255.6px;color:#1e1e1e;transform:scaleX(0.965);">jquery-1.11.2.js</div>
<div class="t" style="left:1098.3px;top:273.6px;color:#1e1e1e;transform:scaleX(0.963);">jquery-2.1.3.js</div>
<div class="t" style="left:1098.3px;top:291.6px;color:#1e1e1e;transform:scaleX(1.013);">Web.config</div>
<div class="t" style="left:1099.3px;top:309.6px;color:#333;transform:scaleX(0.945);">WebForm1.aspx</div>
<div class="t" style="left:1116.6px;top:327.6px;color:#1e1e1e;transform:scaleX(0.941);">WebForm1.aspx.cs</div>
<div class="t" style="left:1116.6px;top:345.6px;color:#1e1e1e;transform:scaleX(0.955);">WebForm1.aspx.designer.cs</div>
<div class="t" style="left:1034.7px;top:684.1px;color:#2a5f8f;transform:scaleX(0.964);">Solution Explorer</div>
<div class="t" style="left:1134.8px;top:684.1px;color:#3a3a3a;transform:scaleX(0.958);">Team Explorer</div>
</div>

<!-- ===== status bar ===== -->
<div id="status">
<div class="abs" style="left:5px;top:703px;width:1366px;height:6px;background:linear-gradient(#f7f2f3 0,#f7f2f3 50%,#e3f8ff 66%,#e3f8ff 100%)"></div>
<div class="abs" style="left:5px;top:709px;width:1366px;height:23px;background:#17466d"></div>
<svg style="left:1358px;top:723px" width="9" height="8" viewBox="0 0 9 8"><g fill="#9fc8ea"><rect x="6.6" y="0" width="1.2" height="1.2"/><rect x="4.4" y="2.2" width="1.2" height="1.2"/><rect x="6.6" y="2.2" width="1.2" height="1.2"/><rect x="2.2" y="4.4" width="1.2" height="1.2"/><rect x="4.4" y="4.4" width="1.2" height="1.2"/><rect x="6.6" y="4.4" width="1.2" height="1.2"/><rect x="0" y="6.6" width="1.2" height="1.2"/><rect x="2.2" y="6.6" width="1.2" height="1.2"/><rect x="4.4" y="6.6" width="1.2" height="1.2"/><rect x="6.6" y="6.6" width="1.2" height="1.2"/></g></svg>
<div class="t" style="left:9.5px;top:712.7px;color:#d4ecff;transform:scaleX(0.908);">Ready</div>
<div class="t" style="left:999.8px;top:712.7px;color:#d4ecff;transform:scaleX(0.879);">Ln 31</div>
<div class="t" style="left:1091.6px;top:712.7px;color:#d4ecff;transform:scaleX(0.925);">Col 28</div>
<div class="t" style="left:1183.9px;top:712.7px;color:#d4ecff;transform:scaleX(0.887);">Ch 28</div>
<div class="t" style="left:1318.9px;top:712.7px;color:#d4ecff;transform:scaleX(0.924);">INS</div>
</div>

</div></div>
</body>
</html>
